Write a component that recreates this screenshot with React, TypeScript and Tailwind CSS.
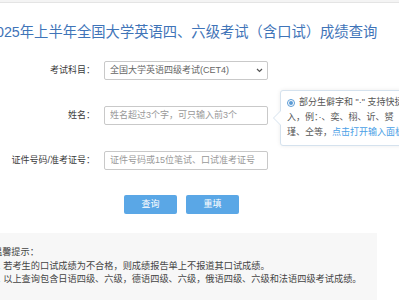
import React from "react";

const FONT = "font-['Liberation_Sans','Noto_Sans_CJK_SC',sans-serif]";

function Field({ label, children }: { label: string; children: React.ReactNode }) {
  return (
    <div className="flex items-center h-[19px]">
      <label className="w-[97px] pr-[2px] text-right text-[9px] text-[#3a3a3a] whitespace-nowrap">
        {label}
      </label>
      <div className="ml-[7px]">{children}</div>
    </div>
  );
}

export default function App() {
  return (
    <div className={`${FONT} relative w-[399px] h-[300px] overflow-hidden bg-white`}>
      {/* top bar */}
      <div className="h-[3px] bg-[#f4f4f4] border-b border-[#e4e4e4]" />

      {/* Title */}
      <h1 className="mt-[19px] ml-[-12px] h-[20px] leading-[20px] text-[14.3px] text-[#3f74b8] whitespace-nowrap font-normal">
        2025年上半年全国大学英语四、六级考试（含口试）成绩查询
      </h1>

      {/* Form */}
      <div className="mt-[19px] flex flex-col gap-[26px]">
        <Field label="考试科目：">
          <div className="w-[164px] h-[19px] border border-[#c9c9c9] rounded-[2px] flex items-center justify-between pl-[5px] pr-[4px]">
            <span className="text-[9px] text-[#666]">全国大学英语四级考试(CET4)</span>
            <svg width="7" height="5" viewBox="0 0 7 5" fill="none">
              <path d="M1 1l2.5 2.5L6 1" stroke="#555" strokeWidth="1.2" />
            </svg>
          </div>
        </Field>
        <Field label="姓名：">
          <div className="w-[164px] h-[19px] border border-[#c9c9c9] rounded-[2px] flex items-center pl-[5px]">
            <span className="text-[9px] text-[#999]">姓名超过3个字，可只输入前3个</span>
          </div>
        </Field>
        <Field label="证件号码/准考证号：">
          <div className="w-[164px] h-[19px] border border-[#c9c9c9] rounded-[2px] flex items-center pl-[5px]">
            <span className="text-[9px] text-[#999]">证件号码或15位笔试、口试准考证号</span>
          </div>
        </Field>
      </div>

      {/* Buttons */}
      <div className="mt-[25px] flex gap-[9px] pl-[124px]">
        <button className="w-[53px] h-[19px] rounded-[2px] bg-[#5aa7e6] text-white text-[9px]">查询</button>
        <button className="w-[53px] h-[19px] rounded-[2px] bg-[#5aa7e6] text-white text-[9px]">重填</button>
      </div>

      {/* Notice */}
      <div className="mt-[19px] ml-[-7px] w-[384px] h-[80px] bg-[#f7f7f7] pt-[13px] text-[9.2px] leading-[13.5px] text-[#444] whitespace-nowrap">
        <p>温馨提示：</p>
        <p>1. 若考生的口试成绩为不合格，则成绩报告单上不报道其口试成绩。</p>
        <p>2. 以上查询包含日语四级、六级，德语四级、六级，俄语四级、六级和法语四级考试成绩。</p>
      </div>

      {/* Tooltip */}
      <div className="absolute left-[280px] top-[90px] w-[140px] h-[56px] bg-white border border-[#d5e2ee] rounded-[3px] shadow-[0_0_4px_rgba(0,0,0,0.08)] pl-[6px] pt-[4px] text-[9px] leading-[15px] text-[#555] whitespace-nowrap">
        <div className="absolute left-[-8px] top-[19px] w-0 h-0 border-y-[8px] border-y-transparent border-r-[8px] border-r-[#d5e2ee]" />
        <div className="absolute left-[-7px] top-[19px] w-0 h-0 border-y-[8px] border-y-transparent border-r-[8px] border-r-white" />
        <div className="flex items-center gap-[4px]">
          <span className="w-[8px] h-[8px] rounded-full border border-[#5b9bd5] flex items-center justify-center">
            <span className="w-[4px] h-[4px] rounded-full bg-[#5b9bd5]" />
          </span>
          <span>部分生僻字和 "·" 支持快捷输</span>
        </div>
        <p>入，例：·、奕、栩、䜣、赟</p>
        <p>
          瑾、仝等，<span className="text-[#4aa0e6]">点击打开输入面板</span>
        </p>
      </div>
    </div>
  );
}
